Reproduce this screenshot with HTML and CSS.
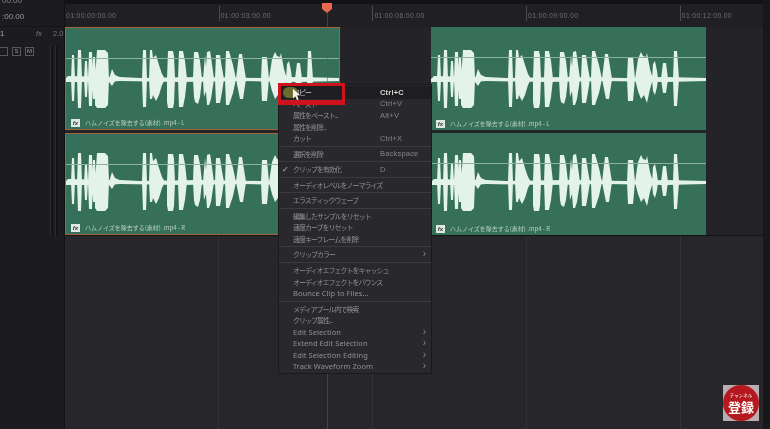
FILE: index.html
```html
<!DOCTYPE html>
<html lang="ja">
<head>
<meta charset="utf-8">
<title>Timeline</title>
<link rel="stylesheet" href="styles.css">
</head>
<body>
<svg class="defs" width="0" height="0" aria-hidden="true">
  <symbol id="wave" viewBox="0 0 275 100" preserveAspectRatio="none">
    <path fill="#e4f3ea" d="M0 52l3-3 40 1 12 0 20 1 60-1 60 1 40-1 40 1v3l-40 1-60-1-60 1-60-1-12 1-40 0-40 1-3-3z"/>
    <path fill="#e4f3ea" d="M6 52l1-24h2l1 24-1 22h-2zM12 52l1-29h3l1 29-1 29h-3zM19 52l1-18h2l1 18-1 18h-2zM23 52l1-27h3l1 27-1 27h-3zM27 52l1-22h2l1 22-1 20h-2zM30 52l2-29h8l3 3 1 26-1 26-3 3h-8l-2-3zM44 52l3-10 3 6 7 3-7 3-3 5-3-4z"/>
    <path fill="#e4f3ea" d="M77 52l1-29h3l1 29-1 28h-3zM84 52l1-29h2l1 8 3-3 3 10 3 9 3 5-3 6-3 10-3 6-3-6-1 4h-2zM102 52l1-28h5l1 5 1 23-1 24-1 5h-5l-1-6zM113 52l1-28h4l2 10 2 18-2 18-2 10h-4zM128 52l1-27h4l2 9 2 18-2 18-2 7-3-2-1-5zM138 52l2-24 1 12 1-15 3-1 1 6 3 22-3 20-2 6h-2l-1-14-2 6zM150 52l1-24h4l2 13 2 11-2 13-2 11h-4zM160 52l1-28h3l4 14 3 14-3 14-4 12h-3zM171 52l3-25h3l4 25-3 20h-3zM196 52l1-22h5l2 22-2 22h-5zM204 52l3-20 3-7 2 4 3 1 1-4 3 16 3 10-3 10-3 14-3-8-3 4-3-8zM221 52l1-15 2-3 2 10 1 8-1 8-2 8-2-4zM230 52l2-16h3l2 16-2 14h-3zM242 52l1-28h3l2 28-2 27h-3z"/>
  </symbol>
</svg>

<div class="app">
  <aside class="side">
    <div class="time-top">00:00</div>
    <div class="time-main">:00.00</div>
    <div class="head-row"><span class="tname">1</span><span class="fx">fx</span><span class="vol">2.0</span></div>
    <div class="btn-row"><span class="tbtn"></span><span class="tbtn">S</span><span class="tbtn">M</span></div>
    <div class="meter"><span></span><span></span></div>
  </aside>

  <main class="timeline">
    <div class="topbar"></div>
    <div class="ruler">
      <span class="tick first">01:00:00:00.00</span>
      <span class="tick">01:00:03:00.00</span>
      <span class="tick">01:00:06:00.00</span>
      <span class="tick">01:00:09:00.00</span>
      <span class="tick">01:00:12:00.00</span>
    </div>
    <div class="tracks">
      <div class="track">
        <div class="clip selected">
          <svg class="wave"><use href="#wave"/></svg>
          <div class="clip-label"><span class="fxb">fx</span>ハムノイズを除去する(素材) .mp4 - L</div>
        </div>
        <div class="clip">
          <svg class="wave"><use href="#wave"/></svg>
          <div class="clip-label"><span class="fxb">fx</span>ハムノイズを除去する(素材) .mp4 - L</div>
        </div>
      </div>
      <div class="track second">
        <div class="clip selected">
          <svg class="wave"><use href="#wave"/></svg>
          <div class="clip-label"><span class="fxb">fx</span>ハムノイズを除去する(素材) .mp4 - R</div>
        </div>
        <div class="clip">
          <svg class="wave"><use href="#wave"/></svg>
          <div class="clip-label"><span class="fxb">fx</span>ハムノイズを除去する(素材) .mp4 - R</div>
        </div>
      </div>
    </div>
    <div class="empty">
      <i></i><i></i><i></i><i></i>
    </div>
  </main>
  <div class="edge"></div>
</div>

<div class="playhead">
  <svg class="ph-head" width="10" height="10" viewBox="0 0 10 10"><path fill="#e8694f" d="M0 0h10v6L5 10 0 6z"/></svg>
</div>

<nav class="menu">
  <div class="item active"><span class="blob"></span><span class="label">コピー</span><span class="key">Ctrl+C</span></div>
  <div class="item"><span class="label">ペースト</span><span class="key">Ctrl+V</span></div>
  <div class="item"><span class="label">属性をペースト...</span><span class="key">Alt+V</span></div>
  <div class="item"><span class="label">属性を削除...</span></div>
  <div class="item"><span class="label">カット</span><span class="key">Ctrl+X</span></div>
  <hr>
  <div class="item"><span class="label">選択を削除</span><span class="key">Backspace</span></div>
  <hr>
  <div class="item"><span class="check">✓</span><span class="label">クリップを有効化</span><span class="key">D</span></div>
  <hr>
  <div class="item"><span class="label">オーディオレベルをノーマライズ</span></div>
  <hr>
  <div class="item"><span class="label">エラスティックウェーブ</span></div>
  <hr>
  <div class="item"><span class="label">編集したサンプルをリセット</span></div>
  <div class="item"><span class="label">速度カーブをリセット</span></div>
  <div class="item"><span class="label">速度キーフレームを削除</span></div>
  <hr>
  <div class="item"><span class="label">クリップカラー</span><span class="arrow">›</span></div>
  <hr>
  <div class="item"><span class="label">オーディオエフェクトをキャッシュ</span></div>
  <div class="item"><span class="label">オーディオエフェクトをバウンス</span></div>
  <div class="item"><span class="label en">Bounce Clip to Files...</span></div>
  <hr>
  <div class="item"><span class="label">メディアプール内で検索</span></div>
  <div class="item"><span class="label">クリップ属性...</span></div>
  <div class="item"><span class="label en">Edit Selection</span><span class="arrow">›</span></div>
  <div class="item"><span class="label en">Extend Edit Selection</span><span class="arrow">›</span></div>
  <div class="item"><span class="label en">Edit Selection Editing</span><span class="arrow">›</span></div>
  <div class="item"><span class="label en">Track Waveform Zoom</span><span class="arrow">›</span></div>
</nav>

<div class="redbox"></div>
<svg class="cursor" width="10" height="13" viewBox="0 0 12 16"><path fill="#f2f2ee" d="M1 1v12l3-3 2 5 2-1-2-5h4z"/></svg>

<div class="badge"><div class="badge-circle"><span class="badge-small">チャンネル</span><span class="badge-big">登録</span></div></div>
</body>
</html>
```
FILE: styles.css
```css
* { box-sizing: border-box; }
html, body { margin: 0; height: 100%; }
body {
  width: 770px;
  height: 429px;
  overflow: hidden;
  background: #1f1f24;
  font-family: "Noto Sans CJK JP", "Noto Sans", sans-serif;
  position: relative;
}
.defs { position: absolute; }
.app {
  display: flex;
  width: 770px;
  height: 429px;
  overflow: hidden;
  filter: blur(0.45px);
}

/* Left track header */
.side {
  width: 65px;
  flex: none;
  background: #1c1c20;
  border-right: 1px solid #121215;
  position: relative;
  color: #8a8a8e;
  font-size: 7.5px;
}
.time-top { height: 13px; margin-top: -6px; padding-left: 2px; line-height: 13px; font-family: "Liberation Sans", sans-serif; color: #85858a; font-size: 8px; }
.time-main { height: 20px; padding: 4px 0 0 2px; line-height: 12px; font-family: "Liberation Sans", sans-serif; color: #9a9a9e; font-size: 8px; border-bottom: 1px solid #131316; }
.head-row { display: flex; align-items: center; height: 13px; font-family: "Liberation Sans", sans-serif; }
.tname { width: 36px; color: #b0b0b2; }
.fx { width: 17px; font-style: italic; color: #77777b; }
.vol { color: #77777b; }
.btn-row { display: flex; gap: 4px; margin-top: 7px; margin-left: -1px; }
.tbtn {
  width: 9px; height: 9px;
  border: 1px solid #58585c;
  font: 6px/7px "Liberation Sans", sans-serif;
  text-align: center;
  color: #9c9ca0;
}
.meter { display: flex; gap: 2px; position: absolute; left: 50px; top: 46px; height: 190px; }
.meter span { width: 3px; height: 100%; background: #141417; border-left: 1px solid #2b2b30; }

/* Timeline */
.timeline { flex: 1; display: flex; flex-direction: column; min-width: 0; }
.topbar { height: 4px; background: #131316; }
.ruler {
  height: 23px;
  display: flex;
  overflow: hidden;
  background: #1f1f24;
  font: 6.8px/10px "Liberation Sans", sans-serif;
  color: #6f6f74;
  letter-spacing: 0.35px;
}
.tick { width: 153.7px; flex: none; padding: 5px 0 0 1px; border-left: 1px solid #4a4a4f; height: 15px; margin-top: 2px; white-space: nowrap; }
.tick.first { border-left: 0; }
.tracks { background: #232328; height: 209px; border-bottom: 1px solid #141417; }
.track { display: flex; gap: 91px; height: 103px; }
.track.second { margin-top: 3px; height: 102px; }
.clip {
  width: 275px;
  height: 100%;
  background: #37705a;
  position: relative;
  overflow: hidden;
}
.clip.selected { border: 1.5px solid #a4623e; }
.wave { display: block; position: absolute; left: 0; top: 0; width: 275px; height: 100px; }
.second .wave { top: -3px; }
.selected .wave { left: -1.5px; top: -1.5px; }
.second .selected .wave { top: -4.5px; }
.clip::before {
  content: "";
  position: absolute;
  left: 0; right: 0; top: 30px;
  height: 1px;
  background: #8db3a0;
  z-index: 1;
}
.clip-label {
  position: absolute;
  left: 5px; bottom: 2px;
  display: flex;
  align-items: center;
  gap: 5px;
  font-size: 6px;
  line-height: 9px;
  color: #b8cfc3;
  white-space: nowrap;
}
.fxb {
  width: 9px; height: 8px;
  background: #dfe8e3;
  color: #2a3a33;
  font: italic bold 6px/8px "Liberation Sans", sans-serif;
  text-align: center;
}
.empty { flex: 1; overflow: hidden; background: #26262b; display: flex; padding-left: 153px; }
.empty i { width: 154px; flex: none; border-left: 1px solid #313136; }
.edge { width: 7px; flex: none; background: #18181b; margin-left: -7px; position: relative; }

/* Playhead */
.playhead {
  position: absolute;
  left: 327px; top: 3px;
  width: 1px; height: 426px;
  background: rgba(150, 70, 55, .55);
  filter: blur(0.4px);
}
.ph-head { position: absolute; left: -5px; top: 0; }

/* Context menu */
.menu {
  position: absolute;
  left: 278px; top: 84px;
  width: 154px; height: 290px;
  background: #28282d;
  border: 1px solid #1a1a1d;
  padding-top: 1.2px;
  display: flex;
  flex-direction: column;
  filter: blur(0.4px);
  font-size: 7px;
  color: #8f8f94;
}
.item {
  height: 11.55px;
  flex: none;
  display: flex;
  align-items: center;
  padding-left: 14px;
  position: relative;
  white-space: nowrap;
}
.item.active { color: #cfcfcf; height: 13px; margin: -0.7px 0 -0.75px; background: #1e1e21; }
.label { width: 87px; flex: none; letter-spacing: -1px; }
.label.en { letter-spacing: 0.05px; font-family: "Noto Sans", sans-serif; font-size: 7.5px; }
.key { font: 7.5px "Liberation Sans", sans-serif; letter-spacing: 0.2px; color: #85858a; }
.active .key { color: #d4d4d4; font-weight: bold; }
.check { position: absolute; left: 3px; color: #c0c0c0; font: 8px "DejaVu Sans", sans-serif; }
.arrow { margin-left: auto; margin-right: 5px; font: 10px/10px "Liberation Sans", sans-serif; color: #85858a; }
.menu hr { height: 1px; margin: 1.7px 0 1.3px; border: 0; background: #3a3a40; flex: none; }
.blob {
  position: absolute;
  left: 4px; top: 1px;
  width: 15px; height: 11px;
  border-radius: 6px;
  background: #6c6a2c;
}
.redbox {
  position: absolute;
  left: 277.5px; top: 83px;
  width: 67px; height: 22px;
  border: 3.5px solid #cf121b;
  border-bottom-width: 5.5px;
  filter: blur(0.4px);
}
.cursor { position: absolute; left: 292px; top: 88px; }

/* Subscribe badge */
.badge {
  position: absolute;
  left: 723px; top: 385px;
  width: 36px; height: 36px;
  background: #b9adb0;
  filter: blur(0.5px);
}
.badge-circle {
  width: 36px; height: 36px;
  border-radius: 50%;
  background: #b3191f;
  color: #fff;
  display: flex;
  flex-direction: column;
  align-items: center;
  justify-content: center;
  gap: 1px;
}
.badge-small { font-size: 4.5px; line-height: 6px; white-space: nowrap; }
.badge-big { font-size: 13px; line-height: 15px; font-weight: 700; white-space: nowrap; }
```
